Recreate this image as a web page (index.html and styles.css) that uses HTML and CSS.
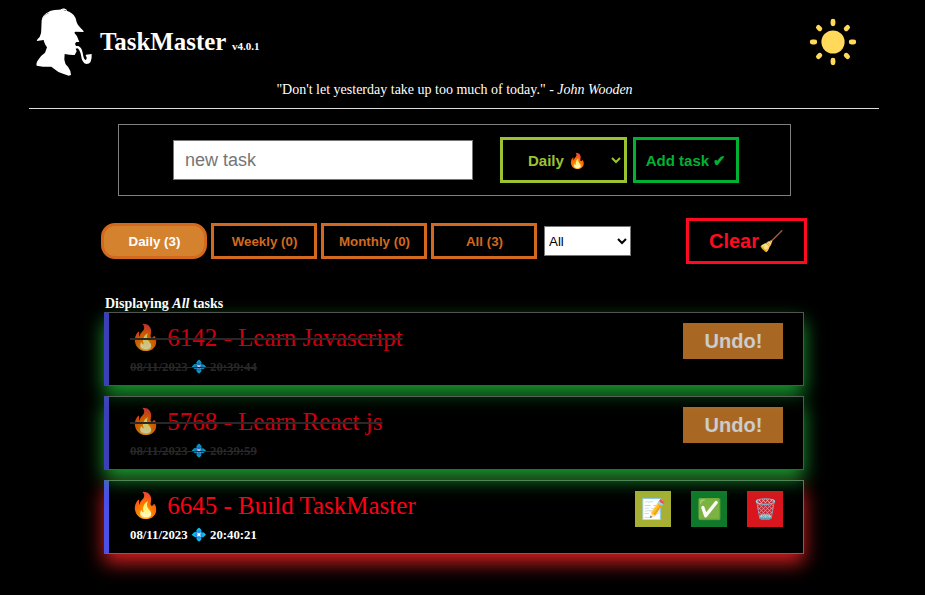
FILE: index.html
```
<!DOCTYPE html>
<html lang="en">
<head>
<meta charset="utf-8">
<title>TaskMaster</title>
<link rel="stylesheet" href="styles.css">
</head>
<body>
<div class="page">
  <header class="header">
    <div class="brand">
      <svg class="logo" viewBox="0 0 210 225" aria-hidden="true">
        <path fill="#fff" d="M35 45 Q43 29 57 24 L54 22 Q61 16 74 15 L86 14 L103 12 L112 14 L100 16 Q120 18 131 30 Q139 39 140 52 Q144 63 160 77 L161 81 L136 80 L133 83 L141 94 L148 111 L139 111 L135 116 L138 123 L145 123 Q155 127 158 143 Q161 164 167 165 Q171 163 170 156 L167 153 L168 149 L185 147 Q187 177 169 177 Q156 175 153 151 Q149 133 142 130 L137 131 L140 139 L134 150 Q124 151 104 147 L103 162 Q104 178 114 185 Q123 197 123 210 L116 212 L95 205 Q85 202 76 194 L64 185 Q49 187 20 182 Q17 174 26 163 Q34 150 45 143 L51 127 L46 119 Q42 112 41 105 L21 108 Q18 106 29 96 Q35 83 34 70 Z"/>
        <path fill="none" stroke="#fff" stroke-width="3" d="M37 41 Q44 24 60 22 M93 14 Q105 8 110 18"/>
      </svg>
      <h1 class="title">TaskMaster <span class="version">v4.0.1</span></h1>
    </div>
    <svg class="sun" viewBox="0 0 48 48" aria-hidden="true">
      <circle cx="24" cy="24" r="11.6"/>
      <g class="rays">
        <path d="M24 3.2v2.6M24 42.2v2.6M3.2 24h2.6M42.2 24h2.6M9.4 9.4l1.4 1.4M37.2 37.2l1.4 1.4M9.4 38.6l1.4-1.4M37.2 10.8l1.4-1.4"/>
      </g>
    </svg>
  </header>
  <p class="quote">"Don't let yesterday take up too much of today." - <em>John Wooden</em></p>

  <form class="new-task">
    <input class="task-input" type="text" placeholder="new task">
    <select class="period"><option>Daily 🔥</option></select>
    <button class="add" type="button">Add task ✔</button>
  </form>

  <nav class="filters">
    <button class="tab active">Daily (3)</button>
    <button class="tab">Weekly (0)</button>
    <button class="tab">Monthly (0)</button>
    <button class="tab">All (3)</button>
    <select class="status"><option>All</option><option>Completed</option></select>
    <button class="clear">Clear🧹</button>
  </nav>

  <main class="tasks">
    <h2 class="showing">Displaying <em>All</em> tasks</h2>
    <article class="task done">
      <div class="info">
        <div class="name">🔥 6142 - Learn Javascript</div>
        <div class="date">08/11/2023 💠 20:39:44</div>
      </div>
      <button class="undo">Undo!</button>
    </article>
    <article class="task done">
      <div class="info">
        <div class="name">🔥 5768 - Learn React js</div>
        <div class="date">08/11/2023 💠 20:39:59</div>
      </div>
      <button class="undo">Undo!</button>
    </article>
    <article class="task">
      <div class="info">
        <div class="name">🔥 6645 - Build TaskMaster</div>
        <div class="date">08/11/2023 💠 20:40:21</div>
      </div>
      <div class="actions">
        <button class="action edit">📝</button>
        <button class="action check">✅</button>
        <button class="action delete">🗑️</button>
      </div>
    </article>
  </main>
</div>
</body>
</html>
```
FILE: styles.css
```
* { box-sizing: border-box; }
body {
  margin: 0;
  min-height: 100vh;
  background: #000;
  color: #fff;
  font-family: "Liberation Serif", serif;
}
button, select, input { font-family: "Liberation Sans", sans-serif; margin: 0; }
.page { width: 850px; min-height: 595px; margin-left: 29px; }
.header {
  height: 80px;
  display: flex;
  justify-content: space-between;
  padding: 5px 22px 0 1px;
}
.brand { display: flex; }
.logo { width: 70px; height: 75px; }
.title { margin: 22px 0 0 0; font-size: 24.9px; line-height: 30px; white-space: nowrap; }
.version { font-size: 11px; }
.sun { width: 48px; height: 48px; margin-top: 13px; fill: #ffd959; }
.rays { stroke: #ffd959; stroke-width: 4.8; stroke-linecap: round; }
.quote {
  margin: 0;
  height: 29px;
  padding: 1px 0 0 1px;
  border-bottom: 1px solid #ddd;
  text-align: center;
  font-size: 14px;
  line-height: 17px;
}
.new-task {
  width: 673px;
  height: 72px;
  margin: 15px 0 0 89px;
  border: 1px solid #808080;
  display: flex;
  align-items: center;
  padding-left: 54px;
}
.task-input {
  width: 300px;
  height: 40px;
  border: 1px solid #767676;
  padding: 0 11px;
  font-size: 18px;
}
.period {
  width: 127px;
  height: 46px;
  margin-left: 27px;
  border: 3px solid #9dc22f;
  background: #000;
  color: #9dc22f;
  font-size: 15px;
  font-weight: bold;
  padding-left: 21px;
}
.add {
  width: 106px;
  height: 46px;
  margin-left: 6px;
  padding: 1px 0 0;
  border: 3px solid #00b232;
  background: #000;
  color: #00b232;
  font-size: 15px;
  font-weight: bold;
}
.filters {
  height: 46px;
  margin: 22px 0 0 72px;
  display: flex;
  align-items: center;
}
.tab {
  width: 106px;
  height: 36px;
  margin-right: 4px;
  padding: 0 0 0 1px;
  border: 3px solid #d2691e;
  background: #000;
  color: #d2691e;
  font-size: 13.33px;
  font-weight: bold;
}
.active { background: #d5822f; color: #fff; border-radius: 14px; }
.status {
  width: 87px;
  height: 30px;
  margin-left: 3px;
  border: 1px solid #767676;
  background: #fff;
  color: #000;
  font-size: 13.33px;
}
.clear {
  width: 121px;
  height: 46px;
  margin-left: 55px;
  padding: 0;
  border: 3px solid #ff0a20;
  background: #000;
  color: #ff0a20;
  font-size: 20px;
  font-weight: bold;
}
.tasks { width: 700px; margin: 31px 0 0 75px; }
.showing { margin: 0 0 0 1px; font-size: 14px; line-height: 17px; }
.task {
  height: 74px;
  margin-bottom: 10px;
  border: 1px solid #696969;
  border-left: 5px solid #4b50e6;
  background: rgba(0, 0, 0, .6);
  box-shadow: 0 9px 18px #d21e1e;
  display: flex;
  justify-content: space-between;
  padding: 10px 20px 0 21px;
}
.done {
  opacity: .8;
  box-shadow: 0 9px 18px #20be3c;
}
.name { color: #ff0014; font-size: 25px; line-height: 30px; height: 32px; }
.date { font-size: 12.8px; font-weight: bold; line-height: 24px; }
.done .name { text-decoration: line-through 2px #333; }
.done .date { text-decoration: line-through 1px #333; color: #333; }
.undo {
  width: 100px;
  height: 36px;
  padding: 0 0 0 1px;
  border: 0;
  background: #d2822d;
  color: #fff;
  font-size: 20px;
  font-weight: bold;
}
.actions { display: flex; gap: 20px; }
.action { width: 36px; height: 36px; border: 0; padding: 0; font-size: 20px; }
.edit { background: #a8b033; }
.check { background: #10782a; }
.delete { background: #d9151e; }
```
